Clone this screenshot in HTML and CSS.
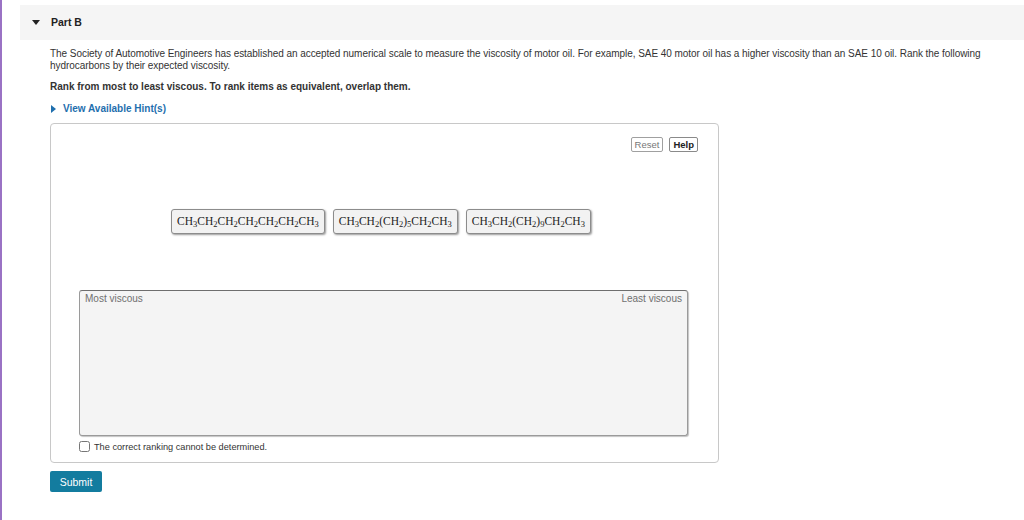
FILE: index.html
```html
<!DOCTYPE html>
<html lang="en">
<head>
    <meta charset="UTF-8">
    <title>Part B</title>
    <link rel="stylesheet" href="styles.css">
</head>
<body>
    <div class="parte">
        <div class="cabecera">
            <span class="flecha"></span>
            <span class="titulo">Part B</span>
        </div>

        <div class="contenido">
            <p class="enunciado">The Society of Automotive Engineers has established an accepted numerical scale to measure the viscosity of motor oil. For example, SAE 40 motor oil has a higher viscosity than an SAE 10 oil. Rank the following hydrocarbons by their expected viscosity.</p>
            <p class="instruccion">Rank from most to least viscous. To rank items as equivalent, overlap them.</p>
            <a class="pistas" href="#"><span class="flechita"></span>View Available Hint(s)</a>

            <div class="caja">
                <div class="botones">
                    <button class="mini reset">Reset</button>
                    <button class="mini">Help</button>
                </div>

                <div class="fichas">
                    <div class="ficha">CH<sub>3</sub>CH<sub>2</sub>CH<sub>2</sub>CH<sub>2</sub>CH<sub>2</sub>CH<sub>2</sub>CH<sub>3</sub></div>
                    <div class="ficha">CH<sub>3</sub>CH<sub>2</sub>(CH<sub>2</sub>)<sub>5</sub>CH<sub>2</sub>CH<sub>3</sub></div>
                    <div class="ficha">CH<sub>3</sub>CH<sub>2</sub>(CH<sub>2</sub>)<sub>9</sub>CH<sub>2</sub>CH<sub>3</sub></div>
                </div>

                <div class="ranking">
                    <span>Most viscous</span>
                    <span>Least viscous</span>
                </div>

                <label class="check"><input type="checkbox"> The correct ranking cannot be determined.</label>
            </div>

            <button class="enviar">Submit</button>
        </div>
    </div>
</body>
</html>
```

FILE: styles.css
```css
body {
    margin: 0;
    min-height: 520px;
    border-left: 2px solid #9a72c4;
    background: #ffffff;
    font-family: "Liberation Sans", Arial, sans-serif;
    font-size: 10px;
    color: #333333;
    box-sizing: border-box;
}

.parte {
    padding-top: 5px;
}

.cabecera {
    margin-left: 18px;
    height: 35px;
    background: #f5f5f5;
    display: flex;
    align-items: center;
}

.flecha {
    margin-left: 12px;
    width: 0;
    height: 0;
    border-left: 4px solid transparent;
    border-right: 4px solid transparent;
    border-top: 5px solid #222222;
}

.titulo {
    margin-left: 11px;
    font-weight: bold;
    font-size: 10.5px;
    color: #222222;
    margin-top: -1px;
}

.contenido {
    padding: 8px 22px 0 48px;
}

.enunciado {
    margin: 0;
    line-height: 12px;
    max-width: 950px;
    letter-spacing: -0.05px;
}

.instruccion {
    margin: 8px 0 0 0;
    font-weight: bold;
    line-height: 13px;
}

.pistas {
    display: inline-flex;
    align-items: center;
    margin-top: 9px;
    color: #1f6fae;
    font-weight: bold;
    text-decoration: none;
    line-height: 13px;
}

.flechita {
    width: 0;
    height: 0;
    border-top: 4px solid transparent;
    border-bottom: 4px solid transparent;
    border-left: 5px solid #1f6fae;
    margin: 0 7px 0 1px;
}

.caja {
    margin-top: 8px;
    width: 669px;
    height: 340px;
    border: 1px solid #c8c8c8;
    border-radius: 4px;
    box-sizing: border-box;
    padding: 13px 30px 0 28px;
}

.botones {
    display: flex;
    justify-content: flex-end;
    gap: 6px;
    margin-right: -10px;
}

.mini {
    font-family: "Liberation Sans", Arial, sans-serif;
    font-size: 9.5px;
    padding: 1px 3px;
    background: #ffffff;
    border: 1px solid #8a8a8a;
    border-radius: 2px;
    color: #222222;
    font-weight: bold;
    height: 15px;
    line-height: 11px;
}

.mini.reset {
    font-weight: normal;
    color: #777777;
    border-color: #a0a0a0;
}

.fichas {
    display: flex;
    justify-content: center;
    gap: 8px;
    margin-top: 57px;
    padding-right: 5px;
}

.ficha {
    font-family: "Liberation Serif", "Times New Roman", serif;
    font-size: 11.5px;
    color: #222222;
    background: #f2f2f2;
    border: 1px solid #8c8c8c;
    border-radius: 3px;
    box-shadow: 1px 1px 2px #9a9a9a;
    padding: 3px 5px 4px 5px;
    height: 16px;
    line-height: 16px;
}

.ficha sub {
    font-size: 8.5px;
    vertical-align: -2px;
    line-height: 0;
}

.ranking {
    margin-top: 56px;
    height: 146px;
    background: #f4f4f4;
    border: 1px solid #9a9a9a;
    border-top-color: #6e6e6e;
    border-radius: 3px;
    box-shadow: 1px 1px 1px #c4c4c4;
    box-sizing: border-box;
    display: flex;
    justify-content: space-between;
    align-items: flex-start;
    padding: 2px 5px 0 5px;
    font-size: 10px;
    color: #707070;
}

.check {
    display: flex;
    align-items: center;
    margin-top: 5px;
    font-size: 9.2px;
    color: #333333;
}

.check input {
    margin: 0 4px 0 0;
    width: 11px;
    height: 11px;
}

.enviar {
    margin-top: 8px;
    background: #137c9f;
    color: #ffffff;
    border: none;
    border-radius: 2px;
    font-family: "Liberation Sans", Arial, sans-serif;
    font-size: 10.5px;
    width: 52px;
    height: 21px;
    padding: 0;
}
```
